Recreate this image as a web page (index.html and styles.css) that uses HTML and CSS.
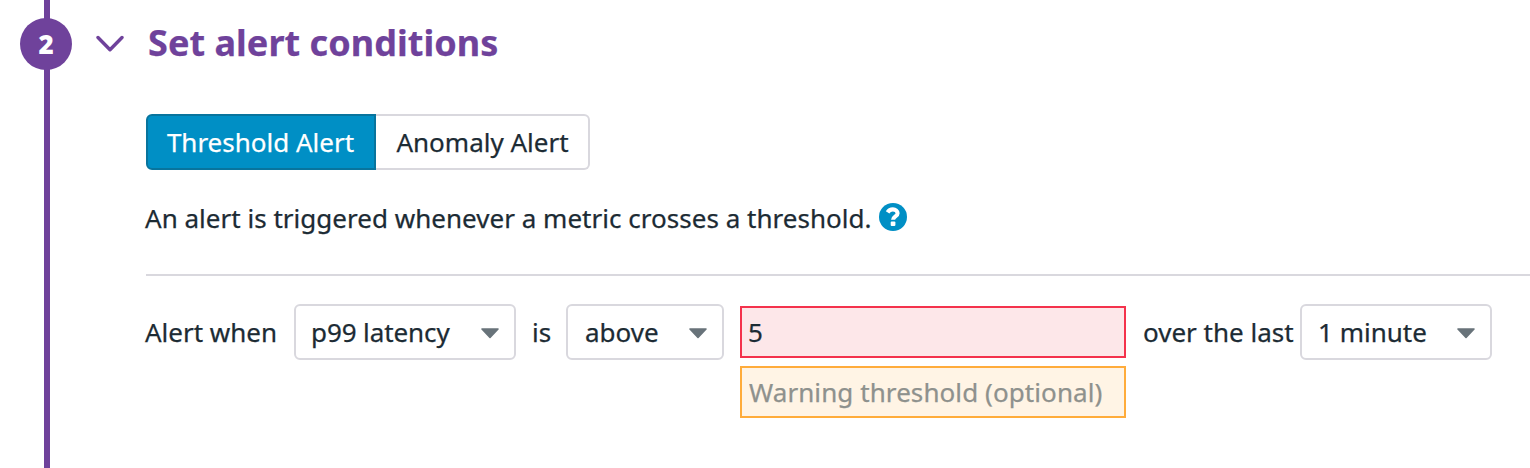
FILE: index.html
```html
<!DOCTYPE html>
<html lang="en">
<head>
<meta charset="utf-8">
<title>Set alert conditions</title>
<link rel="stylesheet" href="styles.css">
</head>
<body>
<section class="step">
  <div class="rail"><span class="step-number">2</span></div>
  <div class="content">
    <header class="heading">
      <svg class="chevron" viewBox="0 0 28 18"><path d="M2 2.500 14 14.800 26 2.500"/></svg>
      <h2>Set alert conditions</h2>
    </header>
    <div class="body">
      <div class="tabs">
        <button class="tab active">Threshold Alert</button>
        <button class="tab">Anomaly Alert</button>
      </div>
      <p class="hint"><span>An alert is triggered whenever a metric crosses a threshold.</span>
        <svg class="help" viewBox="0 0 28 28"><circle cx="14" cy="14" r="14"/><path class="hook" d="M8.600 9.400C9.700 7.500 11.500 6.400 13.900 6.400c2.700 0 4.700 1.600 4.700 3.800 0 3.300-4.500 3.100-4.500 6.600"/><rect class="dot" x="11.700" y="18.600" width="4.700" height="4.400" rx="1"/></svg>
      </p>
      <div class="rule">
        <span class="label when">Alert when</span>
        <div class="select metric"><span>p99 latency</span><svg class="caret" viewBox="0 0 18 11"><path d="M1 1H17L9 9.500Z"/></svg></div>
        <span class="label is">is</span>
        <div class="select compare"><span>above</span><svg class="caret" viewBox="0 0 18 11"><path d="M1 1H17L9 9.500Z"/></svg></div>
        <div class="thresholds">
          <input class="critical" type="text" value="5">
          <input class="warning" type="text" placeholder="Warning threshold (optional)">
        </div>
        <span class="label over">over the last</span>
        <div class="select window"><span>1 minute</span><svg class="caret" viewBox="0 0 18 11"><path d="M1 1H17L9 9.500Z"/></svg></div>
      </div>
    </div>
  </div>
</section>
</body>
</html>
```
FILE: styles.css
```css
* { box-sizing: border-box; }
body { margin: 0; background: #fff; color: #1c2b34; font: 26px/36px "Noto Sans", sans-serif; -webkit-text-stroke: .25px; overflow: hidden; }
.step { display: flex; height: 468px; width: 1530px; }
.rail { width: 52px; margin-left: 20px; padding-top: 18px; flex: none; background: linear-gradient(#6f429b, #6f429b) 24px 0 / 6px 100% no-repeat; }
.step-number { display: flex; align-items: center; justify-content: center; width: 52px; height: 52px; border-radius: 50%; background: #6f429b; color: #fff; font-family: "Open Sans", sans-serif; font-size: 26px; font-weight: 800; -webkit-text-stroke: 0; }
.content { flex: 1; min-width: 0; padding-left: 24px; }
.heading { display: flex; align-items: center; gap: 24px; height: 86px; }
.chevron { width: 28px; height: 18px; margin-top: 2px; fill: none; stroke: #6f429b; stroke-width: 3.4; stroke-linecap: round; stroke-linejoin: round; }
h2 { margin: 0; color: #6f429b; font-size: 36px; line-height: 50px; font-weight: 700; letter-spacing: .04px; white-space: nowrap; }
.body { padding: 28px 0 0 50px; }
.tabs { display: flex; height: 56px; }
.tab { width: 214px; padding: 0 0 0 1px; border: 2px solid #d9d8de; border-left: 0; border-radius: 0 6px 6px 0; background: #fff; color: inherit; font: inherit; white-space: nowrap; -webkit-text-stroke: inherit; }
.tab.active { width: 230px; padding: 0 1px 0 0; border: 2px solid #08749d; border-radius: 6px 0 0 6px; background: #008fc5; color: #fff; }
.hint { display: flex; gap: 7.5px; margin: 30px 0 0 -1px; height: 36px; white-space: nowrap; letter-spacing: .02px; }
.help { width: 28px; height: 28px; margin-top: 3px; fill: #008fc5; }
.help .hook { fill: none; stroke: #fff; stroke-width: 4.1; }
.help .dot { fill: #fff; }
.rule { display: flex; align-items: flex-start; margin-top: 38px; padding-top: 28px; border-top: 2px solid #d9d8de; white-space: nowrap; }
.label { line-height: 56px; flex: none; }
.when { width: 149px; margin-left: -1px; }
.is { width: 50px; padding-left: 16px; }
.over { width: 174px; padding-left: 17px; }
.select { display: flex; align-items: center; justify-content: space-between; flex: none; height: 56px; padding: 0 15px 0 16px; border: 2px solid #d9d8de; border-radius: 6px; }
.metric { width: 222px; padding-left: 15px; letter-spacing: -.1px; }
.compare { width: 158px; padding-left: 17px; }
.window { width: 192px; }
.caret { width: 18px; height: 11px; margin-top: 2px; fill: #68737a; stroke: #68737a; stroke-width: 1.6; stroke-linejoin: round; }
.thresholds { display: flex; flex-direction: column; gap: 8px; width: 386px; margin: 2px 0 0 16px; flex: none; }
input { width: 100%; height: 52px; padding: 0 7px; border: 2px solid #f4324c; border-radius: 0; background: #fde7e9; color: inherit; font: inherit; -webkit-text-stroke: inherit; }
.critical { padding-left: 6px; }
.warning { border-color: #ffac3b; background: #fff4e5; letter-spacing: .08px; }
.warning::placeholder { color: #8e918d; opacity: 1; }
```
